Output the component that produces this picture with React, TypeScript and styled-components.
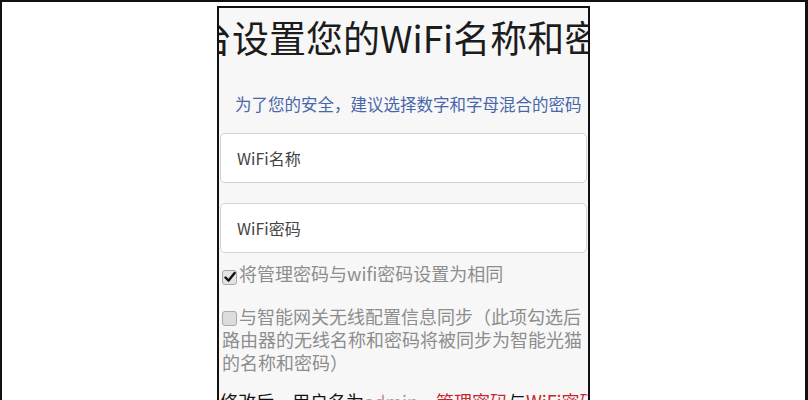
import React from 'react';
import styled, { createGlobalStyle } from 'styled-components';

const GlobalStyle = createGlobalStyle`
  html, body {
    margin: 0;
    padding: 0;
    background: #fff;
  }
  * {
    box-sizing: border-box;
  }
`;

const Frame = styled.div`
  width: 808px;
  height: 400px;
  overflow: hidden;
  display: flex;
  justify-content: center;
  align-items: flex-start;
  border-top: 2px solid #111;
  border-left: 2px solid #111;
  border-right: 3px solid #111;
  background: #fff;
  font-family: 'Noto Sans CJK SC', 'Noto Sans', sans-serif;
`;

const Phone = styled.div`
  width: 373px;
  height: 394px;
  margin-top: 4px;
  flex-shrink: 0;
  overflow: hidden;
  border: 2px solid #111;
  border-bottom: none;
  background: #f7f7f8;
`;

const Title = styled.h1`
  margin: 0;
  padding-top: 11px;
  font-size: 37px;
  line-height: 37px;
  font-weight: 400;
  color: #1c1c1c;
  white-space: nowrap;
  overflow: hidden;
  text-indent: -24px;
`;

const Hint = styled.p`
  margin: 37px 0 0;
  padding-left: 16px;
  font-size: 16.5px;
  line-height: 22px;
  color: #4766a8;
  white-space: nowrap;
`;

const Field = styled.div<{ $gap: number }>`
  height: 50px;
  margin: ${(p) => p.$gap}px 1px 0;
  display: flex;
  align-items: center;
  padding-left: 16px;
  border: 1px solid #d3d3d5;
  border-radius: 5px;
  background: #fff;
  font-size: 16px;
  color: #444;
`;

const Option = styled.label<{ $gap: number }>`
  display: block;
  margin-top: ${(p) => p.$gap}px;
  padding-left: 3px;
  font-size: 18px;
  line-height: 23px;
  color: #8d8d8d;
`;

const Box = styled.span<{ $checked?: boolean }>`
  display: inline-flex;
  align-items: center;
  justify-content: center;
  width: 15px;
  height: 15px;
  margin-right: 2px;
  vertical-align: -2px;
  border: 1px solid #a9a9a9;
  border-radius: 3px;
  background: ${(p) => (p.$checked ? '#e4e4e4' : '#dcdcdc')};
`;

const Note = styled.p`
  margin: 16px 0 0;
  padding-left: 1px;
  font-size: 18px;
  line-height: 23px;
  color: #111;
  white-space: nowrap;
`;

const Muted = styled.span`
  color: #b59aa0;
`;

const Red = styled.span`
  color: #c8262c;
`;

const Check: React.FC<{ checked?: boolean }> = function ({ checked }) {
  return (
    <Box $checked={checked}>
      {checked && (
        <svg width="12" height="12" viewBox="0 0 12 12">
          <path d="M1.5 6.5 L4.6 9.6 L10.6 2" fill="none" stroke="#111" strokeWidth="2.4" strokeLinecap="round" strokeLinejoin="round" />
        </svg>
      )}
    </Box>
  );
};

const App: React.FC = function () {
  return (
    <>
      <GlobalStyle />
      <Frame>
        <Phone>
          <Title>台设置您的WiFi名称和密码</Title>
          <Hint>为了您的安全，建议选择数字和字母混合的密码</Hint>
          <Field $gap={18}>WiFi名称</Field>
          <Field $gap={20}>WiFi密码</Field>
          <Option $gap={9}>
            <Check checked />将管理密码与wifi密码设置为相同
          </Option>
          <Option $gap={20}>
            <Check />与智能网关无线配置信息同步（此项勾选后路由器的无线名称和密码将被同步为智能光猫的名称和密码）
          </Option>
          <Note>
            修改后，用户名为<Muted>admin</Muted>，<Red>管理密码</Red>与<Red>WiFi密码</Red>相同
          </Note>
        </Phone>
      </Frame>
    </>
  );
};

export default App;
